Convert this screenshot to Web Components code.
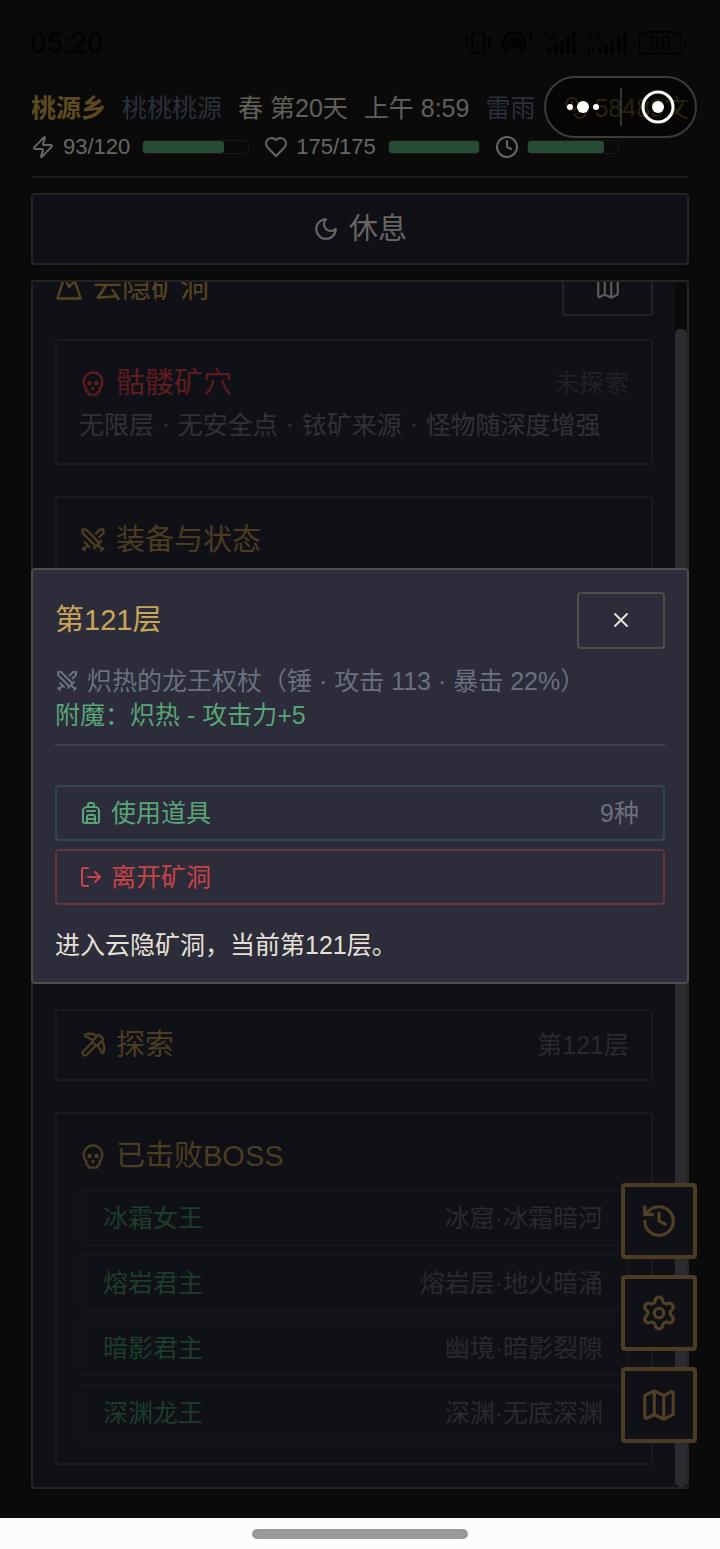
<!DOCTYPE html>
<html lang="zh-CN">
<head>
<meta charset="utf-8">
<meta name="viewport" content="width=device-width, initial-scale=1">
<title>桃源乡</title>
<style>
  :root {
    --bg: #0a0a0a; --panel: #101116; --line: #24231f; --line-dim: #1a1b1e;
    --gold: #c9a557; --gold-dim: #4b3c22; --muted: #6a7080; --muted-dim: #2a2c31;
    --small: 25px; --large: 29px;
  }
  html, body { margin: 0; height: 100%; background: var(--bg); }
  body { font-family: "Liberation Sans", "Noto Sans CJK SC", sans-serif; font-size: var(--small); line-height: 34px; overflow: hidden; }
</style>
</head>
<body>
<game-app></game-app>
<script>
const ICONS = {
  zap: '<path d="M4 14a1 1 0 0 1-.78-1.63l9.9-10.2a.5.5 0 0 1 .86.46l-1.92 6.02A1 1 0 0 0 13 10h7a1 1 0 0 1 .78 1.63l-9.9 10.2a.5.5 0 0 1-.86-.46l1.92-6.02A1 1 0 0 0 11 14z"/>',
  heart: '<path d="M19 14c1.49-1.46 3-3.21 3-5.5A5.5 5.5 0 0 0 16.5 3c-1.76 0-3 .5-4.5 2-1.5-1.5-2.74-2-4.5-2A5.5 5.5 0 0 0 2 8.5c0 2.3 1.5 4.05 3 5.5l7 7Z"/>',
  clock: '<circle cx="12" cy="12" r="10"/><path d="M12 6v6l4 2"/>',
  coins: '<circle cx="8" cy="8" r="6"/><path d="M18.09 10.37A6 6 0 1 1 10.34 18M7 6h1v4M16.71 13.88l.7.71-2.82 2.82"/>',
  moon: '<path d="M12 3a6 6 0 0 0 9 9 9 9 0 1 1-9-9Z"/>',
  mountain: '<path d="m8 3 4 8 5-5 5 15H2L8 3z"/>',
  map: '<path d="M14.106 5.553a2 2 0 0 0 1.788 0l3.659-1.83A1 1 0 0 1 21 4.619v12.764a1 1 0 0 1-.553.894l-4.553 2.277a2 2 0 0 1-1.788 0l-4.212-2.106a2 2 0 0 0-1.788 0l-3.659 1.83A1 1 0 0 1 3 19.381V6.618a1 1 0 0 1 .553-.894l4.553-2.277a2 2 0 0 1 1.788 0zM15 5.764v15M9 3.236v15"/>',
  skull: '<path d="m12.5 17-.5-1-.5 1h1z"/><path d="M15 22a1 1 0 0 0 1-1v-1a2 2 0 0 0 1.56-3.25 8 8 0 1 0-11.12 0A2 2 0 0 0 8 20v1a1 1 0 0 0 1 1z"/><circle cx="15" cy="12" r="1"/><circle cx="9" cy="12" r="1"/>',
  swords: '<path d="M14.5 17.5 3 6V3h3l11.5 11.5M13 19l6-6M16 16l4 4M19 21l2-2M14.5 6.5 18 3h3v3l-3.5 3.5M5 14l4 4M7 17l-3 3M3 19l2 2"/>',
  x: '<path d="M18 6 6 18M6 6l12 12"/>',
  backpack: '<path d="M4 10a4 4 0 0 1 4-4h8a4 4 0 0 1 4 4v10a2 2 0 0 1-2 2H6a2 2 0 0 1-2-2zM8 10h8M8 18h8M8 22v-6a2 2 0 0 1 2-2h4a2 2 0 0 1 2 2v6M9 6V4a2 2 0 0 1 2-2h2a2 2 0 0 1 2 2v2"/>',
  exit: '<path d="M9 21H5a2 2 0 0 1-2-2V5a2 2 0 0 1 2-2h4M16 17l5-5-5-5M21 12H9"/>',
  pickaxe: '<path d="M14.531 12.469 6.619 20.38a1 1 0 1 1-3-3l7.912-7.912M15.686 4.314A12.5 12.5 0 0 0 5.461 2.958 1 1 0 0 0 5.58 4.71a22 22 0 0 1 6.318 3.393M17.7 3.7a1 1 0 0 0-1.4 0l-4.6 4.6a1 1 0 0 0 0 1.4l2.6 2.6a1 1 0 0 0 1.4 0l4.6-4.6a1 1 0 0 0 0-1.4zM19.686 8.314a12.501 12.501 0 0 1 1.356 10.225 1 1 0 0 1-1.751-.119 22 22 0 0 0-3.393-6.319"/>',
  history: '<path d="M3 12a9 9 0 1 0 9-9 9.75 9.75 0 0 0-6.74 2.74L3 8M3 3v5h5M12 7v5l4 2"/>',
  settings: '<path d="M9.671 4.136a2.34 2.34 0 0 1 4.659 0 2.34 2.34 0 0 0 3.319 1.915 2.34 2.34 0 0 1 2.33 4.033 2.34 2.34 0 0 0 0 3.831 2.34 2.34 0 0 1-2.33 4.033 2.34 2.34 0 0 0-3.319 1.915 2.34 2.34 0 0 1-4.659 0 2.34 2.34 0 0 0-3.32-1.915 2.34 2.34 0 0 1-2.33-4.033 2.34 2.34 0 0 0 0-3.831A2.34 2.34 0 0 1 6.35 6.051a2.34 2.34 0 0 0 3.319-1.915"/><circle cx="12" cy="12" r="3"/>'
};

const BASE = '*{box-sizing:border-box}button{font:inherit;color:inherit;background:none;margin:0;cursor:pointer}';

function define(name, render) {
  customElements.define(name, class extends HTMLElement {
    connectedCallback() {
      if (this.shadowRoot) return;
      const root = this.attachShadow({ mode: 'open' });
      const t = document.createElement('template');
      t.innerHTML = render(this);
      root.append(t.content.cloneNode(true));
    }
  });
}

define('line-icon', el => `<style>
  :host{display:block;flex:none;width:var(--icon,24px);height:var(--icon,24px)}
  svg{display:block;width:100%;height:100%}
  </style><svg viewBox="0 0 24 24" fill="none" stroke="currentColor" stroke-width="2" stroke-linecap="round" stroke-linejoin="round" aria-hidden="true">${ICONS[el.getAttribute('name')]}</svg>`);

define('device-status', () => `<style>${BASE}
  :host{display:flex;align-items:center;justify-content:space-between;height:86px;padding:0 33px 0 30px;color:#020202;font-family:Roboto,sans-serif;font-weight:500}
  time{font-size:29px}
  .tray{display:flex;align-items:center;gap:8px}
  svg{display:block;overflow:visible}
  .sig{position:relative;width:36px;height:24px}
  .sig b{position:absolute;left:0;top:0;font-size:13px;line-height:12px;font-weight:500}
  .batt{display:flex;align-items:center;gap:2px;margin-left:8px}
  .batt span{width:44px;height:24px;border:2px solid;border-radius:7px;font-size:20px;line-height:20px;text-align:center;font-weight:700}
  .batt i{width:3px;height:6px;background:currentColor;border-radius:0 2px 2px 0}
  </style>
  <time>05:20</time>
  <div class="tray">
    <svg width="28" height="24" fill="none" stroke="currentColor" stroke-width="3"><rect x="8" y="2" width="12" height="20" rx="2"/><path d="M4 5l-2 3 2 3-2 3 2 4M24 5l2 3-2 3 2 3-2 4" stroke-width="2"/></svg>
    <svg width="34" height="24" fill="none" stroke="currentColor" stroke-width="3"><circle cx="14" cy="13" r="2" fill="currentColor"/><path d="M8 22a11 11 0 1 1 12 0M10 18a6 6 0 1 1 8 0"/><path d="M29 2l2-1v10" stroke-width="2"/></svg>
    <div class="sig"><b>5A</b><svg width="34" height="24" fill="currentColor"><path d="M5 17h4v6H5zM12 14h4v9h-4zM18 10h4v13h-4zM24 5h4v18h-4zM30 1h4v22h-4z"/></svg></div>
    <div class="sig"><b>5A</b><svg width="42" height="24" fill="currentColor"><path d="M2 17h2v6H2zM6 15h2v6H6zM12 17h4v6h-4zM18 14h4v9h-4zM24 10h4v13h-4zM31 5h4v18h-4zM37 1h4v22h-4z"/></svg></div>
    <div class="batt"><span>80</span><i></i></div>
  </div>`);

define('stat-meter', el => {
  const text = el.getAttribute('text') || '';
  return `<style>${BASE}
  :host{display:flex;align-items:center;gap:8px;color:#696764}
  span{font-size:22px;margin-right:4px}
  .bar{width:var(--bar,92px);height:14px;border:1px solid #181818;border-radius:4px}
  .fill{height:12px;width:${el.getAttribute('value')}%;background:#264c35;border-radius:3px}
  </style><line-icon name="${el.getAttribute('icon')}"></line-icon>${text ? `<span>${text}</span>` : ''}
  <div class="bar" role="meter" aria-label="${el.getAttribute('label')}" aria-valuenow="${el.getAttribute('value')}"><div class="fill"></div></div>`;
});

define('game-header', () => `<style>${BASE}
  :host{display:block;padding-bottom:13px;border-bottom:2px solid #1c1a12;color:#62605c}
  .row{display:flex;align-items:center;white-space:nowrap}
  .top{height:44px;gap:16px}
  .top b{color:#5f4a20}
  .top .name,.top .sky{color:#2b303a}
  .money{display:flex;align-items:center;gap:6px;color:#54421f;margin-left:auto}
  .stats{height:33px;gap:15px}
  </style>
  <div class="row top"><b>桃源乡</b><span class="name">桃桃桃源</span><span>春 第20天</span><span>上午 8:59</span><span class="sky">雷雨</span><span class="money"><line-icon name="coins"></line-icon>58489文</span></div>
  <div class="row stats">
    <stat-meter icon="zap" text="93/120" value="77" label="体力" style="--bar:107px"></stat-meter>
    <stat-meter icon="heart" text="175/175" value="100" label="生命"></stat-meter>
    <stat-meter icon="clock" value="85" label="时间"></stat-meter>
  </div>`);

define('info-card', el => `<style>${BASE}
  :host{display:block;flex:none;border:2px solid var(--line-dim);border-radius:3px;padding:22px;color:var(--gold-dim)}
  :host([compact]){padding:14px 22px}
  :host([tall]){height:482px}
  :host([danger]){color:#5e1c21}
  header{display:flex;align-items:center;gap:9px;height:40px;--icon:28px}
  h2{margin:0;font-size:var(--large);font-weight:400;flex:1}
  small{font-size:var(--small);color:var(--note,#282a2f)}
  </style><header><line-icon name="${el.getAttribute('icon')}"></line-icon><h2>${el.getAttribute('heading')}</h2><small>${el.getAttribute('note') || ''}</small></header><slot></slot>`);

define('boss-row', el => `<style>${BASE}
  :host{display:flex;align-items:center;justify-content:space-between;height:57px;padding:0 24px 0 22px;border:2px solid #15161a;border-radius:3px;color:#1d3d2c}
  small{font-size:var(--small);color:#282a2f}
  </style><slot></slot><small>${el.getAttribute('place')}</small>`);

define('mine-panel', () => `<style>${BASE}
  :host{display:flex;flex:1;min-height:0;background:var(--panel);border:2px solid var(--line);border-radius:3px;overflow:hidden}
  .list{flex:1;min-width:0;display:flex;flex-direction:column;justify-content:flex-end;gap:31px;padding:0 22px;padding-bottom:22px;overflow:hidden}
  .head{flex:none;display:flex;align-items:center;gap:10px;height:57px;color:#57451f;--icon:28px;margin-bottom:-8px}
  h1{flex:1;margin:0;font-size:var(--large);font-weight:400}
  .head button{width:91px;height:57px;border:2px solid #232325;border-radius:3px;color:#5d5b58;display:grid;place-items:center;padding:0;--icon:26px}
  p{margin:8px 0 0;line-height:30px;color:#303237;white-space:nowrap;font-family:"DejaVu Sans","Noto Sans CJK SC",sans-serif}
  .bosses{display:grid;gap:8px;margin-top:13px}
  .track{flex:none;width:12px;padding-top:47px;background:var(--bg)}
  .thumb{height:100%;border-radius:5px;background:#292b2f}
  </style>
  <div class="list">
    <div class="head"><line-icon name="mountain"></line-icon><h1>云隐矿洞</h1><button aria-label="地图"><line-icon name="map"></line-icon></button></div>
    <info-card danger icon="skull" heading="骷髅矿穴" note="未探索" style="--note:#1f2125"><p>无限层 · 无安全点 · 铱矿来源 · 怪物随深度增强</p></info-card>
    <info-card tall icon="swords" heading="装备与状态"></info-card>
    <info-card compact icon="pickaxe" heading="探索" note="第121层"></info-card>
    <info-card icon="skull" heading="已击败BOSS"><div class="bosses">
      <boss-row place="冰窟·冰霜暗河">冰霜女王</boss-row>
      <boss-row place="熔岩层·地火暗涌">熔岩君主</boss-row>
      <boss-row place="幽境·暗影裂隙">暗影君主</boss-row>
      <boss-row place="深渊·无底深渊">深渊龙王</boss-row>
    </div></info-card>
  </div>
  <div class="track"><div class="thumb"></div></div>`);

define('menu-capsule', () => `<style>${BASE}
  :host{position:fixed;top:76px;right:23px;width:153px;height:62px;display:flex;align-items:center;border:2px solid #3c3c3c;border-radius:31px;background:rgba(0,0,0,.5);color:#fff}
  button{flex:1;height:100%;border:0;padding:0;display:grid;place-items:center}
  i{width:2px;height:38px;background:#333}
  </style>
  <button aria-label="更多"><svg width="34" height="12" fill="currentColor"><circle cx="4" cy="6" r="3"/><circle cx="17" cy="6" r="6"/><circle cx="30" cy="6" r="3"/></svg></button><i></i>
  <button aria-label="关闭小程序"><svg width="34" height="34" fill="none" stroke="currentColor" stroke-width="3"><circle cx="17" cy="17" r="15"/><circle cx="17" cy="17" r="6" fill="currentColor" stroke="none"/></svg></button>`);

define('float-dock', () => `<style>${BASE}
  :host{position:fixed;right:23px;bottom:106px;display:grid;gap:16px;--icon:38px}
  button{width:76px;height:76px;border:4px solid #4c3c22;border-radius:4px;background:var(--panel);color:#514024;display:grid;place-items:center;padding:0}
  </style>
  <button aria-label="日志"><line-icon name="history"></line-icon></button>
  <button aria-label="设置"><line-icon name="settings"></line-icon></button>
  <button aria-label="地图"><line-icon name="map"></line-icon></button>`);

define('floor-dialog', () => `<style>${BASE}
  :host{position:fixed;inset:0;padding:2px 31px 0;display:flex;align-items:center;justify-content:center}
  section{flex:1;background:#2c2c3a;border:2px solid #524c4a;border-radius:4px;padding:22px;padding-bottom:20px;color:#e6e0d6}
  header{display:flex;align-items:center;justify-content:space-between;margin-bottom:15px}
  h2{margin:0;font-size:var(--large);font-weight:400;color:var(--gold)}
  .close{width:88px;height:57px;border:2px solid #524c4a;border-radius:4px;display:grid;place-items:center;padding:0}
  .gear{display:flex;align-items:center;gap:8px;color:var(--muted);white-space:nowrap}
  .charm{color:#58a578;padding-bottom:12px;border-bottom:2px solid #45424a;margin-bottom:39px}
  p{margin:0}
  .act{width:100%;height:56px;display:flex;align-items:center;gap:8px;padding:0 24px;padding-left:22px;border:2px solid;border-radius:4px;text-align:left;margin-bottom:8px}
  .act span{flex:1}
  .act small{font-size:var(--small);color:var(--muted)}
  .use{color:#58a578;border-color:#35444d}
  .leave{color:#c84347;border-color:#62343f;margin-bottom:23px}
  </style>
  <section role="dialog" aria-labelledby="t">
    <header><h2 id="t">第121层</h2><button class="close" aria-label="关闭"><line-icon name="x"></line-icon></button></header>
    <p class="gear"><line-icon name="swords"></line-icon><span>炽热的龙王权杖（锤 · 攻击 113 · 暴击 22%）</span></p>
    <p class="charm">附魔：炽热 - 攻击力+5</p>
    <button class="act use"><line-icon name="backpack"></line-icon><span>使用道具</span><small>9种</small></button>
    <button class="act leave"><line-icon name="exit"></line-icon><span>离开矿洞</span></button>
    <p>进入云隐矿洞，当前第121层。</p>
  </section>`);

define('home-bar', () => `<style>
  :host{display:grid;place-items:center;flex:none;height:31px;background:#fcfcfc;margin-top:29px}
  i{width:30%;height:10px;border-radius:5px;background:#999}
  </style><i></i>`);

define('game-app', () => `<style>${BASE}
  :host{display:flex;flex-direction:column;height:100vh}
  main{flex:1;min-height:0;display:flex;flex-direction:column;padding:0 31px}
  game-header{margin-bottom:15px}
  .rest{flex:none;height:72px;margin-bottom:15px;display:flex;align-items:center;justify-content:center;gap:10px;border:2px solid var(--line);border-radius:4px;background:var(--panel);color:#686663;font-size:var(--large);--icon:26px}
  </style>
  <device-status></device-status>
  <main><game-header></game-header>
    <button class="rest"><line-icon name="moon"></line-icon>休息</button>
    <mine-panel></mine-panel></main>
  <home-bar></home-bar>
  <float-dock></float-dock>
  <floor-dialog></floor-dialog>
  <menu-capsule></menu-capsule>`);
</script>
</body>
</html>
